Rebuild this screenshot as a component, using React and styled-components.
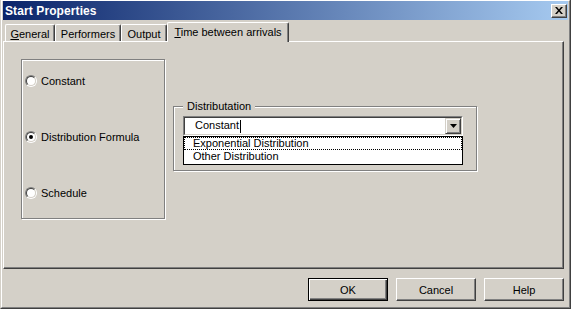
import React from "react";
import styled, { createGlobalStyle } from "styled-components";

const GlobalStyle = createGlobalStyle`
  html, body {
    margin: 0;
    padding: 0;
    background: #d4d0c8;
  }
  * {
    box-sizing: border-box;
  }
`;

const Window = styled.div`
  width: 571px;
  height: 309px;
  background: #d4d0c8;
  border-left: 1px solid #d4d0c8;
  border-right: 1px solid #404040;
  border-bottom: 1px solid #404040;
  font-family: "Liberation Sans", Arial, sans-serif;
  font-size: 11px;
  color: #000;
`;

const Frame = styled.div`
  height: 100%;
  display: flex;
  flex-direction: column;
  border-top: 1px solid #fff;
  border-left: 1px solid #fff;
  border-right: 1px solid #808080;
  border-bottom: 1px solid #808080;
  padding: 0 1px 1px 1px;
`;

const TitleBar = styled.div`
  height: 19px;
  display: flex;
  align-items: center;
  justify-content: space-between;
  padding: 0 1px 0 2px;
  background: linear-gradient(to right, #0a246a, #a6caf0);
`;

const Title = styled.span`
  color: #fff;
  font-weight: bold;
  font-size: 12px;
  letter-spacing: 0.1px;
`;

const CloseButton = styled.div`
  width: 16px;
  height: 14px;
  display: flex;
  align-items: center;
  justify-content: center;
  background: #d4d0c8;
  border: 1px solid;
  border-color: #fff #404040 #404040 #fff;
  box-shadow: inset -1px -1px 0 #808080;
`;

const TabStrip = styled.div`
  height: 21px;
  display: flex;
  align-items: flex-end;
  padding-left: 2px;
  position: relative;
  z-index: 1;
`;

const Tab = styled.div`
  width: ${(p) => p.$w}px;
  height: ${(p) => (p.$active ? 20 : 17)}px;
  margin-bottom: ${(p) => (p.$active ? -1 : 0)}px;
  background: #d4d0c8;
  border-top: 1px solid #fff;
  border-left: 1px solid #fff;
  border-right: 1px solid #404040;
  border-top-left-radius: 2px;
  border-top-right-radius: 2px;
  box-shadow: inset -1px 0 0 #808080;
  display: flex;
  align-items: ${(p) => (p.$active ? "flex-start" : "center")};
  justify-content: center;
  padding-top: ${(p) => (p.$active ? 3 : 1)}px;
  font-size: 11px;
  white-space: nowrap;
`;

const Key = styled.span`
  text-decoration: underline;
`;

const Panel = styled.div`
  width: 561px;
  height: 228px;
  border: 1px solid;
  border-color: #fff #404040 #404040 #fff;
  box-shadow: inset -1px -1px 0 #808080;
  padding: 17px 17px;
  display: flex;
  align-items: flex-start;
`;

const GroupBox = styled.div`
  position: relative;
  width: ${(p) => p.$w}px;
  height: ${(p) => p.$h}px;
  border: 1px solid #808080;
  box-shadow: 1px 1px 0 #fff, inset 1px 1px 0 #fff;
`;

const RadioGroup = styled(GroupBox)`
  display: flex;
  flex-direction: column;
  gap: 44px;
  padding: 15px 0 0 3px;
`;

const RadioRow = styled.label`
  display: flex;
  align-items: center;
  gap: 4px;
  height: 12px;
  font-size: 11px;
`;

const RadioOuter = styled.span`
  width: 12px;
  height: 12px;
  border-radius: 50%;
  border: 1px solid;
  border-color: #808080 #fff #fff #808080;
  display: flex;
`;

const RadioInner = styled.span`
  flex: 1;
  border-radius: 50%;
  border: 1px solid;
  border-color: #404040 #d4d0c8 #d4d0c8 #404040;
  background: #fff;
  display: flex;
  align-items: center;
  justify-content: center;

  &::after {
    content: "";
    width: 4px;
    height: 4px;
    border-radius: 50%;
    background: ${(p) => (p.$checked ? "#000" : "transparent")};
  }
`;

const DistGroup = styled(GroupBox)`
  margin: 47px 0 0 8px;
  padding: 9px 0 0 9px;
`;

const Legend = styled.span`
  position: absolute;
  top: -8px;
  left: 9px;
  padding: 0 4px;
  background: #d4d0c8;
  font-size: 11px;
  line-height: 14px;
`;

const Combo = styled.div`
  position: relative;
  width: 280px;
  height: 20px;
  border: 1px solid;
  border-color: #808080 #fff #fff #808080;
`;

const ComboInner = styled.div`
  height: 100%;
  border: 1px solid;
  border-color: #404040 #d4d0c8 #d4d0c8 #404040;
  background: #fff;
  display: flex;
  align-items: center;
  justify-content: space-between;
  padding-left: 10px;
  font-size: 11px;
`;

const Caret = styled.span`
  display: inline-block;
  width: 1px;
  height: 13px;
  background: #000;
  vertical-align: middle;
  margin-left: 1px;
`;

const ArrowButton = styled.div`
  width: 16px;
  height: 16px;
  background: #d4d0c8;
  border: 1px solid;
  border-color: #d4d0c8 #404040 #404040 #d4d0c8;
  box-shadow: inset 1px 1px 0 #fff, inset -1px -1px 0 #808080;
  display: flex;
  align-items: center;
  justify-content: center;
`;

const DropList = styled.div`
  position: absolute;
  top: calc(100% + 1px);
  left: -1px;
  width: 280px;
  border: 1px solid #000;
  background: #fff;
  z-index: 2;
  padding-bottom: 1px;
`;

const Item = styled.div`
  height: 13px;
  line-height: 13px;
  padding-left: 9px;
  font-size: 11px;
  outline: ${(p) => (p.$focused ? "1px dotted #000" : "none")};
  outline-offset: -1px;
`;

const ButtonRow = styled.div`
  display: flex;
  justify-content: flex-end;
  gap: 8px;
  margin-top: 9px;
  padding-right: 4px;
`;

const Button = styled.button`
  width: 80px;
  height: 23px;
  font-family: inherit;
  font-size: 11px;
  color: #000;
  background: #d4d0c8;
  padding: 0;
  border: 1px solid;
  border-color: ${(p) => (p.$default ? "#000" : "#fff #404040 #404040 #fff")};
  box-shadow: ${(p) =>
    p.$default
      ? "inset 1px 1px 0 #fff, inset -1px -1px 0 #404040, inset -2px -2px 0 #808080"
      : "inset -1px -1px 0 #808080"};
`;

const radios = [
  { label: "Constant", checked: false },
  { label: "Distribution Formula", checked: true },
  { label: "Schedule", checked: false },
];

export default function App() {
  return (
    <>
      <GlobalStyle />
      <Window>
        <Frame>
          <TitleBar>
            <Title>Start Properties</Title>
            <CloseButton>
              <svg width="8" height="7" viewBox="0 0 8 7">
                <path d="M0 0h2l2 2.5L6 0h2L5 3.5 8 7H6L4 4.5 2 7H0l3-3.5z" fill="#000" />
              </svg>
            </CloseButton>
          </TitleBar>
          <TabStrip>
            <Tab $w={50}>
              <span><Key>G</Key>eneral</span>
            </Tab>
            <Tab $w={66}>Performers</Tab>
            <Tab $w={46}>Output</Tab>
            <Tab $w={122} $active>
              <span><Key>T</Key>ime between arrivals</span>
            </Tab>
          </TabStrip>
          <Panel>
            <RadioGroup $w={144} $h={160}>
              {radios.map((r) => (
                <RadioRow key={r.label}>
                  <RadioOuter>
                    <RadioInner $checked={r.checked} />
                  </RadioOuter>
                  {r.label}
                </RadioRow>
              ))}
            </RadioGroup>
            <DistGroup $w={304} $h={65}>
              <Legend>Distributation</Legend>
              <Combo>
                <ComboInner>
                  <span>
                    Constant
                    <Caret />
                  </span>
                  <ArrowButton>
                    <svg width="7" height="4" viewBox="0 0 7 4">
                      <path d="M0 0h7L3.5 4z" fill="#000" />
                    </svg>
                  </ArrowButton>
                </ComboInner>
                <DropList>
                  <Item $focused>Exponential Distribution</Item>
                  <Item>Other Distribution</Item>
                </DropList>
              </Combo>
            </DistGroup>
          </Panel>
          <ButtonRow>
            <Button $default>OK</Button>
            <Button>Cancel</Button>
            <Button>Help</Button>
          </ButtonRow>
        </Frame>
      </Window>
    </>
  );
}
